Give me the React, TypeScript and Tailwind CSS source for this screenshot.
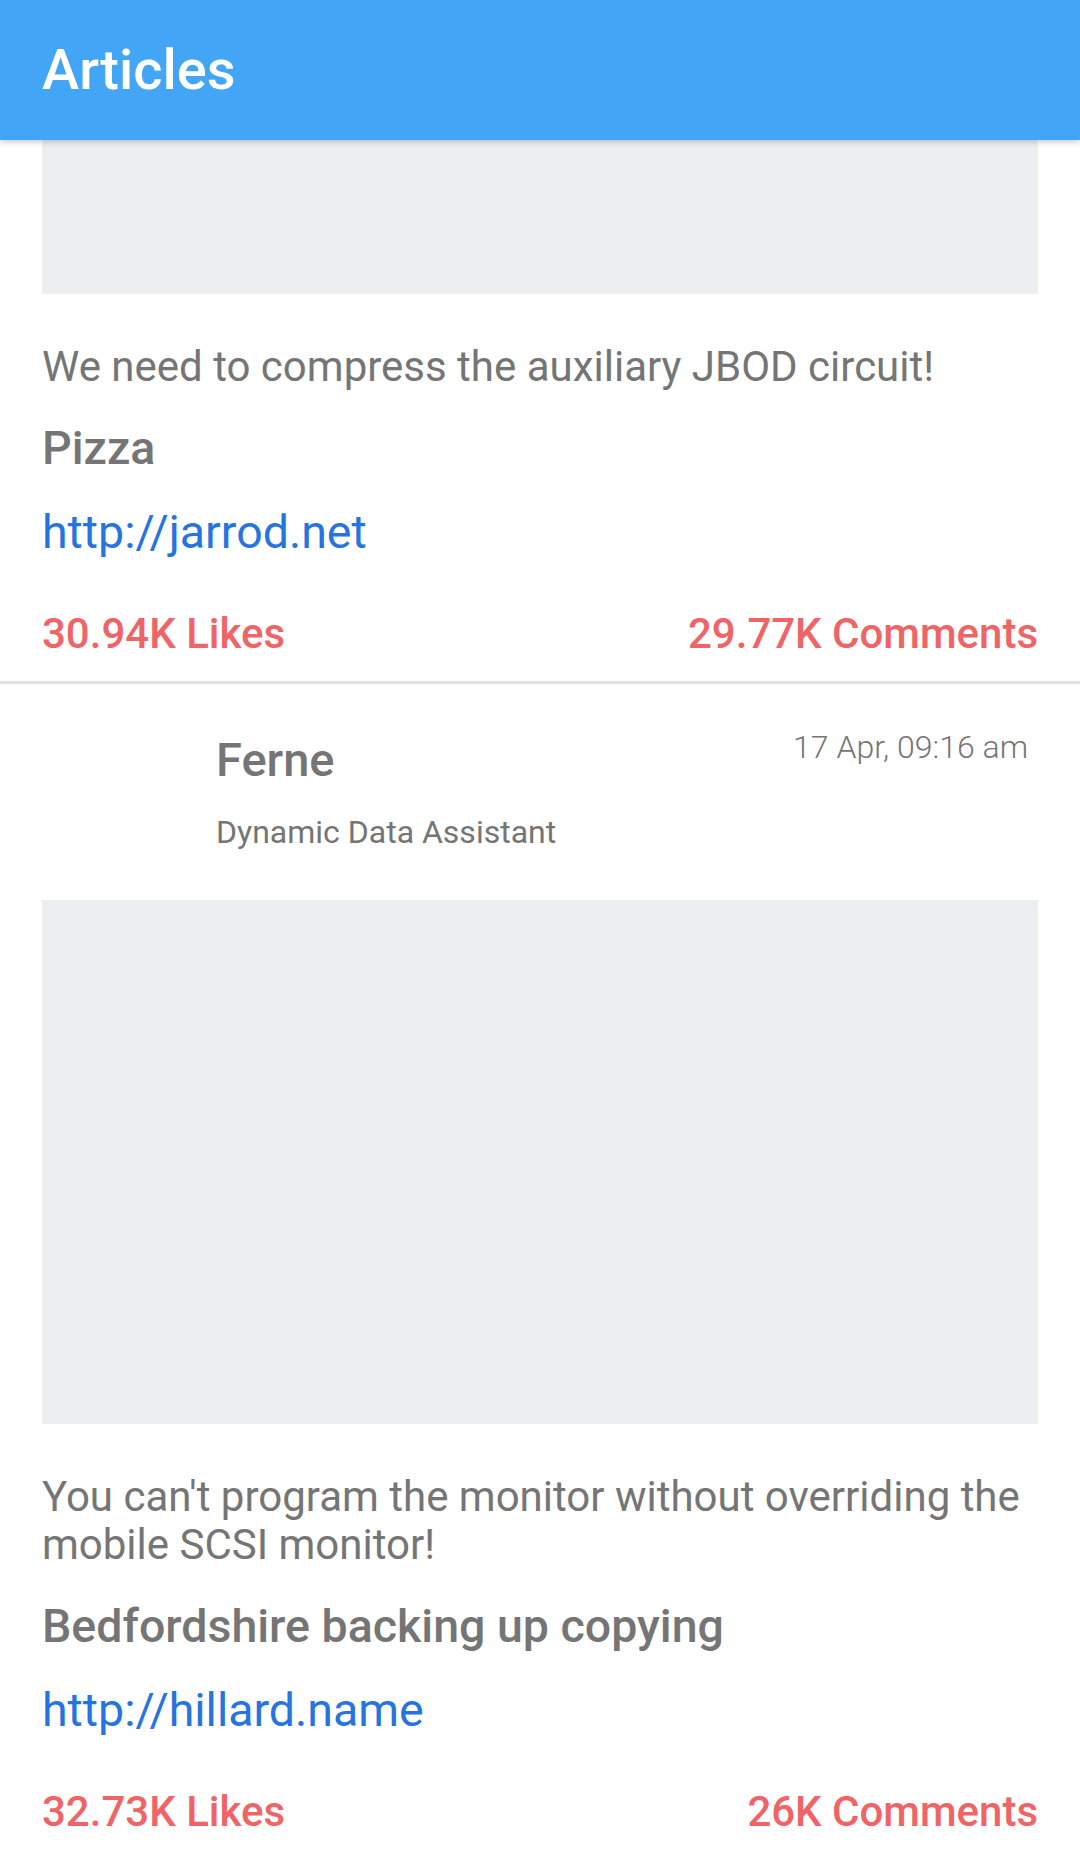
type Article = {
  author?: string;
  role?: string;
  date?: string;
  imageHeight: number;
  body: string;
  title: string;
  url: string;
  likes: string;
  comments: string;
};

const articles: Article[] = [
  {
    imageHeight: 154,
    body: 'We need to compress the auxiliary JBOD circuit!',
    title: 'Pizza',
    url: 'http://jarrod.net',
    likes: '30.94K Likes',
    comments: '29.77K Comments',
  },
  {
    author: 'Ferne',
    role: 'Dynamic Data Assistant',
    date: '17 Apr, 09:16 am',
    imageHeight: 524,
    body: "You can't program the monitor without overriding the mobile SCSI monitor!",
    title: 'Bedfordshire backing up copying',
    url: 'http://hillard.name',
    likes: '32.73K Likes',
    comments: '26K Comments',
  },
];

function ArticleCard({ article }: { article: Article }) {
  return (
    <div className="border-b-[3px] border-[#e0e0e0] px-[42px] pb-[23px]">
      {/* Author */}
      {article.author && (
        <div className="flex pt-[43px] mb-[48px]">
          <div className="w-[148px] shrink-0" />
          <div className="flex-1 min-w-0 pl-[26px] pt-[6px]">
            <p className="text-[47px] leading-[54px] font-medium text-[#757575]">{article.author}</p>
            <p className="mt-[25px] text-[32px] leading-[40px] text-[#757575]">{article.role}</p>
          </div>
          <p className="pr-[10px] text-[32px] leading-[40px] font-light text-[#757575]">{article.date}</p>
        </div>
      )}

      <div className="bg-[#eceff1]" style={{ height: article.imageHeight }} />

      <p className="mt-[49px] text-[42px] leading-[48px] text-[#757575]">{article.body}</p>
      <p className="mt-[30px] text-[46.5px] leading-[54px] font-medium text-[#757575]">{article.title}</p>
      <p className="mt-[30px] text-[46.5px] leading-[54px] text-[#2674e0]">{article.url}</p>

      {/* Stats */}
      <div className="mt-[51px] flex justify-between text-[42px] leading-[48px] font-medium text-[#ef6467]">
        <span>{article.likes}</span>
        <span>{article.comments}</span>
      </div>
    </div>
  );
}

export default function App() {
  return (
    <div className="w-[1080px] h-[1850px] overflow-hidden bg-white font-['Roboto',sans-serif]">
      <header className="relative z-10 h-[140px] bg-[#42a5f5] flex items-center px-[42px] shadow-[0_2px_6px_rgba(0,0,0,0.22)]">
        <h1 className="text-white text-[56px] font-medium">Articles</h1>
      </header>
      {articles.map((a, i) => (
        <ArticleCard key={i} article={a} />
      ))}
    </div>
  );
}
